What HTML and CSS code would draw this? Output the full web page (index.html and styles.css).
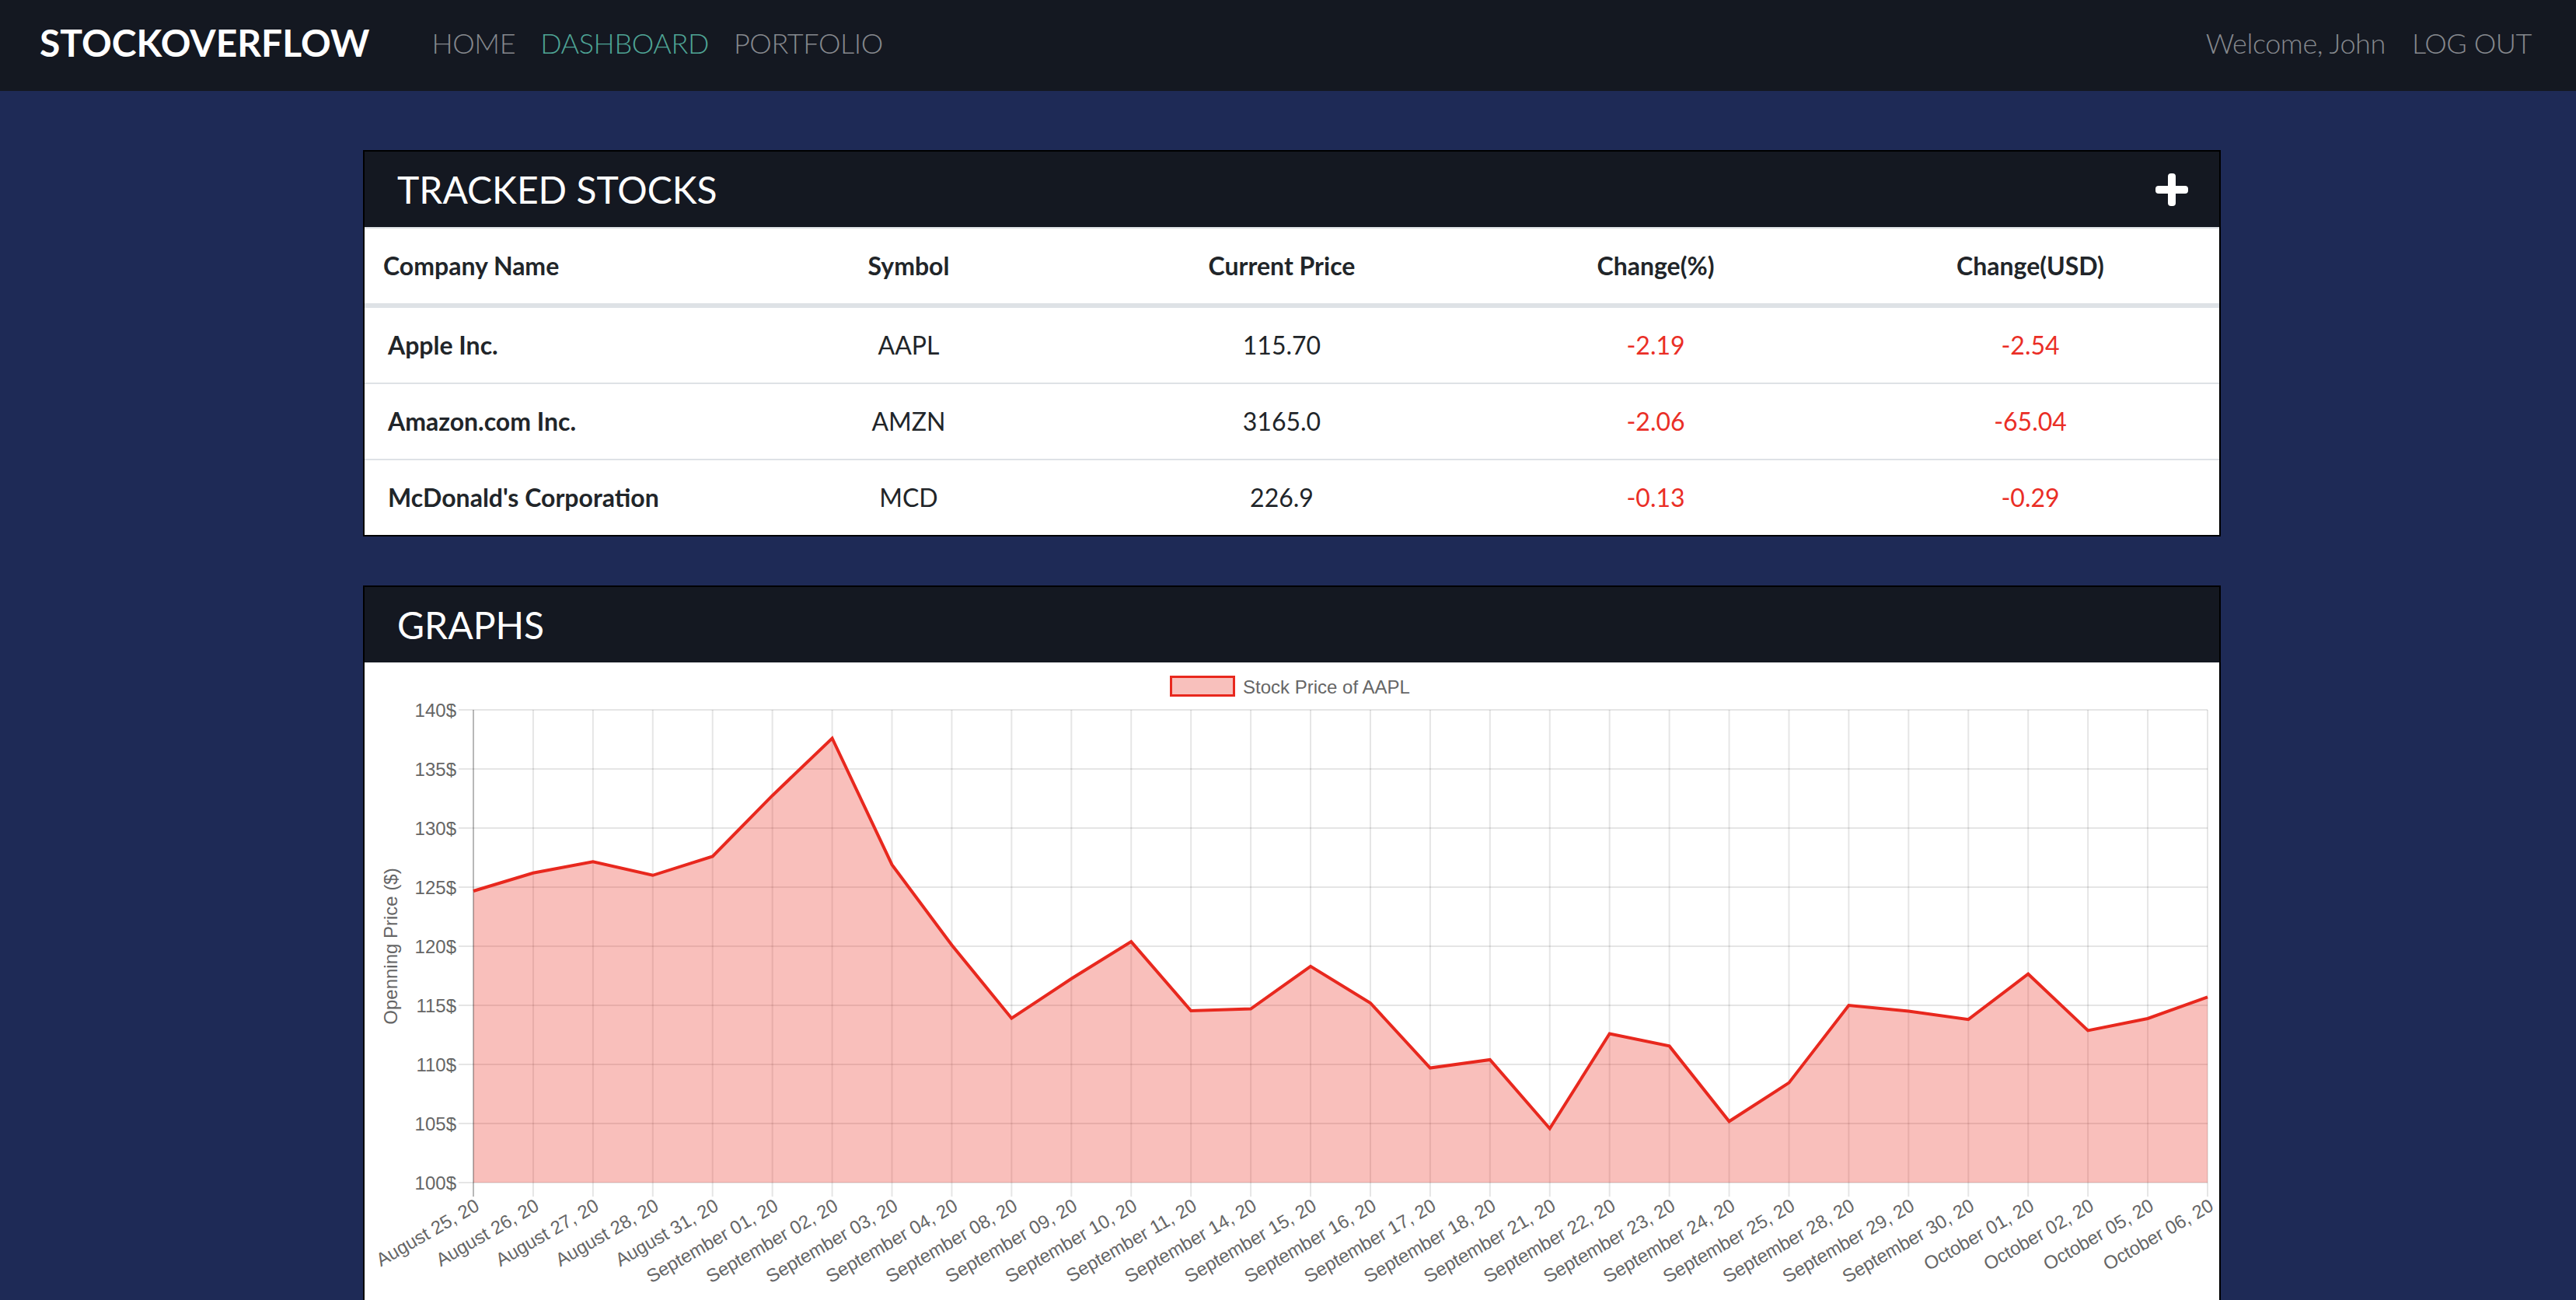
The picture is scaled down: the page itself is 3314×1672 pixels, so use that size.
FILE: index.html
```html
<!DOCTYPE html>
<html lang="en">
<head>
<meta charset="utf-8">
<title>StockOverflow - Dashboard</title>
<link rel="stylesheet" href="styles.css">
</head>
<body>
<nav class="navbar">
  <a class="brand" href="#">STOCKOVERFLOW</a>
  <ul class="nav-links">
    <li><a class="nav-link" href="#">HOME</a></li>
    <li><a class="nav-link active" href="#">DASHBOARD</a></li>
    <li><a class="nav-link" href="#">PORTFOLIO</a></li>
  </ul>
  <div class="nav-right">
    <span class="nav-link">Welcome, John</span>
    <a class="nav-link" href="#">LOG OUT</a>
  </div>
</nav>

<main class="container">
  <section class="card">
    <header class="card-header">
      <h2 class="card-title">TRACKED STOCKS</h2>
      <button class="add-btn" aria-label="Add stock">
        <svg class="plus" viewBox="0 0 42 42"><rect x="16" y="0" width="10" height="42" rx="4"/><rect x="0" y="16" width="42" height="10" rx="4"/></svg>
      </button>
    </header>
    <table class="stocks">
      <colgroup>
        <col class="c1"><col class="c2"><col class="c3"><col class="c4"><col class="c5">
      </colgroup>
      <thead>
        <tr><th class="name">Company Name</th><th>Symbol</th><th>Current Price</th><th>Change(%)</th><th>Change(USD)</th></tr>
      </thead>
      <tbody>
        <tr><td class="name">Apple Inc.</td><td>AAPL</td><td>115.70</td><td class="neg">-2.19</td><td class="neg">-2.54</td></tr>
        <tr><td class="name">Amazon.com Inc.</td><td>AMZN</td><td>3165.0</td><td class="neg">-2.06</td><td class="neg">-65.04</td></tr>
        <tr><td class="name">McDonald's Corporation</td><td>MCD</td><td>226.9</td><td class="neg">-0.13</td><td class="neg">-0.29</td></tr>
      </tbody>
    </table>
  </section>

  <section class="card">
    <header class="card-header">
      <h2 class="card-title">GRAPHS</h2>
    </header>
    <div class="chart-wrap">
      <svg class="chart" viewBox="0 0 2386 860" width="2386" height="860">
        <rect class="legend-box" x="1037.5" y="18.5" width="81" height="24"/>
        <text class="legend-text" x="1130" y="31">Stock Price of AAPL</text>

        <path class="grid" d="M121 61H2371M121 137H2371M121 213H2371M121 289H2371M121 365H2371M121 441H2371M121 517H2371M121 593H2371M121 669H2371"/>
        <path class="grid" d="M216.93 61V687M293.86 61V687M370.79 61V687M447.72 61V687M524.66 61V687M601.59 61V687M678.52 61V687M755.45 61V687M832.38 61V687M909.31 61V687M986.24 61V687M1063.17 61V687M1140.1 61V687M1217.03 61V687M1293.97 61V687M1370.9 61V687M1447.83 61V687M1524.76 61V687M1601.69 61V687M1678.62 61V687M1755.55 61V687M1832.48 61V687M1909.41 61V687M1986.34 61V687M2063.28 61V687M2140.21 61V687M2217.14 61V687M2294.07 61V687M2371 61V687"/>

        <polygon class="area" points="140,294 216.93,270.8 293.86,256.3 370.79,273.8 447.72,249.5 524.66,171.2 601.59,97.5 678.52,260.1 755.45,363.5 832.38,457.7 909.31,406.8 986.24,359.1 1063.17,448 1140.1,445.6 1217.03,390.8 1293.97,438 1370.9,521.6 1447.83,510.9 1524.76,599.5 1601.69,477.5 1678.62,493.4 1755.55,590.3 1832.48,540.6 1909.41,441 1986.34,448.6 2063.28,459.2 2140.21,400.7 2217.14,473.4 2294.07,458 2371,430.4 2371,669 140,669"/>
        <path class="axis" d="M140 61V687"/>
        <polyline class="line" points="140,294 216.93,270.8 293.86,256.3 370.79,273.8 447.72,249.5 524.66,171.2 601.59,97.5 678.52,260.1 755.45,363.5 832.38,457.7 909.31,406.8 986.24,359.1 1063.17,448 1140.1,445.6 1217.03,390.8 1293.97,438 1370.9,521.6 1447.83,510.9 1524.76,599.5 1601.69,477.5 1678.62,493.4 1755.55,590.3 1832.48,540.6 1909.41,441 1986.34,448.6 2063.28,459.2 2140.21,400.7 2217.14,473.4 2294.07,458 2371,430.4"/>

        <g class="ylabels">
          <text x="118" y="61">140$</text>
          <text x="118" y="137">135$</text>
          <text x="118" y="213">130$</text>
          <text x="118" y="289">125$</text>
          <text x="118" y="365">120$</text>
          <text x="118" y="441">115$</text>
          <text x="118" y="517">110$</text>
          <text x="118" y="593">105$</text>
          <text x="118" y="669">100$</text>
        </g>
        <text class="ytitle" x="33" y="365" transform="rotate(-90 33 365)">Openning Price ($)</text>

        <g class="xlabels">
          <text x="145" y="696" transform="rotate(-30 145 696)">August 25, 20</text>
          <text x="221.93" y="696" transform="rotate(-30 221.93 696)">August 26, 20</text>
          <text x="298.86" y="696" transform="rotate(-30 298.86 696)">August 27, 20</text>
          <text x="375.79" y="696" transform="rotate(-30 375.79 696)">August 28, 20</text>
          <text x="452.72" y="696" transform="rotate(-30 452.72 696)">August 31, 20</text>
          <text x="529.66" y="696" transform="rotate(-30 529.66 696)">September 01, 20</text>
          <text x="606.59" y="696" transform="rotate(-30 606.59 696)">September 02, 20</text>
          <text x="683.52" y="696" transform="rotate(-30 683.52 696)">September 03, 20</text>
          <text x="760.45" y="696" transform="rotate(-30 760.45 696)">September 04, 20</text>
          <text x="837.38" y="696" transform="rotate(-30 837.38 696)">September 08, 20</text>
          <text x="914.31" y="696" transform="rotate(-30 914.31 696)">September 09, 20</text>
          <text x="991.24" y="696" transform="rotate(-30 991.24 696)">September 10, 20</text>
          <text x="1068.17" y="696" transform="rotate(-30 1068.17 696)">September 11, 20</text>
          <text x="1145.1" y="696" transform="rotate(-30 1145.1 696)">September 14, 20</text>
          <text x="1222.03" y="696" transform="rotate(-30 1222.03 696)">September 15, 20</text>
          <text x="1298.97" y="696" transform="rotate(-30 1298.97 696)">September 16, 20</text>
          <text x="1375.9" y="696" transform="rotate(-30 1375.9 696)">September 17, 20</text>
          <text x="1452.83" y="696" transform="rotate(-30 1452.83 696)">September 18, 20</text>
          <text x="1529.76" y="696" transform="rotate(-30 1529.76 696)">September 21, 20</text>
          <text x="1606.69" y="696" transform="rotate(-30 1606.69 696)">September 22, 20</text>
          <text x="1683.62" y="696" transform="rotate(-30 1683.62 696)">September 23, 20</text>
          <text x="1760.55" y="696" transform="rotate(-30 1760.55 696)">September 24, 20</text>
          <text x="1837.48" y="696" transform="rotate(-30 1837.48 696)">September 25, 20</text>
          <text x="1914.41" y="696" transform="rotate(-30 1914.41 696)">September 28, 20</text>
          <text x="1991.34" y="696" transform="rotate(-30 1991.34 696)">September 29, 20</text>
          <text x="2068.28" y="696" transform="rotate(-30 2068.28 696)">September 30, 20</text>
          <text x="2145.21" y="696" transform="rotate(-30 2145.21 696)">October 01, 20</text>
          <text x="2222.14" y="696" transform="rotate(-30 2222.14 696)">October 02, 20</text>
          <text x="2299.07" y="696" transform="rotate(-30 2299.07 696)">October 05, 20</text>
          <text x="2376" y="696" transform="rotate(-30 2376 696)">October 06, 20</text>
        </g>
      </svg>
    </div>
  </section>
</main>
</body>
</html>
```

FILE: styles.css
```css
* {
  box-sizing: border-box;
}

html, body {
  margin: 0;
  padding: 0;
}

body {
  background: #1e2a56;
  font-family: Lato, "Open Sans", "Liberation Sans", sans-serif;
  color: #212529;
}

a {
  text-decoration: none;
}

/* ---------- navbar ---------- */
.navbar {
  display: flex;
  align-items: center;
  height: 117px;
  padding: 0 57px 8px 51px;
  background: #141821;
}

.brand {
  font-size: 48px;
  font-weight: 700;
  line-height: 1;
  color: #ffffff;
  margin-right: 80px;
}

.nav-links {
  display: flex;
  gap: 32px;
  list-style: none;
  margin: 0;
  padding: 0;
}

.nav-link {
  font-family: "Lato Light", Lato, "Open Sans", sans-serif;
  font-size: 36px;
  font-weight: 300;
  line-height: 1;
  letter-spacing: -0.4px;
  color: #86898e;
}

.nav-link.active {
  color: #4fa596;
}

.nav-right {
  margin-left: auto;
  display: flex;
  gap: 34px;
}

/* ---------- cards ---------- */
.container {
  width: 2390px;
  margin: 76px 0 0 467px;
}

.card {
  background: #ffffff;
  border: 2px solid #000000;
  margin-bottom: 63px;
}

.card-header {
  display: flex;
  align-items: center;
  justify-content: space-between;
  height: 97px;
  padding: 0 40px 0 42px;
  background: #141821;
}

.card-title {
  margin: 0;
  font-size: 48px;
  font-weight: 400;
  line-height: 1;
  color: #ffffff;
}

.add-btn {
  display: flex;
  padding: 0;
  border: 0;
  background: transparent;
  cursor: pointer;
}

.plus {
  width: 42px;
  height: 42px;
  fill: #ffffff;
}

/* ---------- table ---------- */
.stocks {
  width: 100%;
  table-layout: fixed;
  border-collapse: separate;
  border-spacing: 0;
  font-size: 32px;
  line-height: 48px;
  color: #212529;
}

.c1 { width: 462px; }
.c2 { width: 476px; }
.c3 { width: 484px; }
.c4 { width: 478px; }
.c5 { width: 486px; }

.stocks th,
.stocks td {
  padding: 24px;
  text-align: center;
  border-top: 2px solid #dee2e6;
  white-space: nowrap;
}

.stocks th {
  font-weight: 700;
  border-bottom: 4px solid #dee2e6;
}

.stocks th.name {
  text-align: left;
}

.stocks td.name {
  text-align: left;
  font-weight: 700;
  padding-left: 30px;
}

.stocks td.neg {
  color: #ea2e26;
}

/* ---------- chart ---------- */
.chart-wrap {
  height: 860px;
}

.chart {
  display: block;
  font-family: "Liberation Sans", Arial, Helvetica, sans-serif;
}

.grid {
  fill: none;
  stroke: rgba(0, 0, 0, 0.1);
  stroke-width: 2;
}

.axis {
  fill: none;
  stroke: rgba(0, 0, 0, 0.28);
  stroke-width: 2;
}

.area {
  fill: rgba(234, 42, 30, 0.3);
  stroke: none;
}

.line {
  fill: none;
  stroke: #e8281e;
  stroke-width: 4;
  stroke-linejoin: miter;
}

.legend-box {
  fill: #f8c0bc;
  stroke: #e8281e;
  stroke-width: 3;
}

.legend-text,
.ylabels text,
.ytitle,
.xlabels text {
  font-size: 24px;
  fill: #666666;
  dominant-baseline: central;
}

.ylabels text {
  text-anchor: end;
}

.ytitle {
  text-anchor: middle;
}

.xlabels text {
  text-anchor: end;
}
```
